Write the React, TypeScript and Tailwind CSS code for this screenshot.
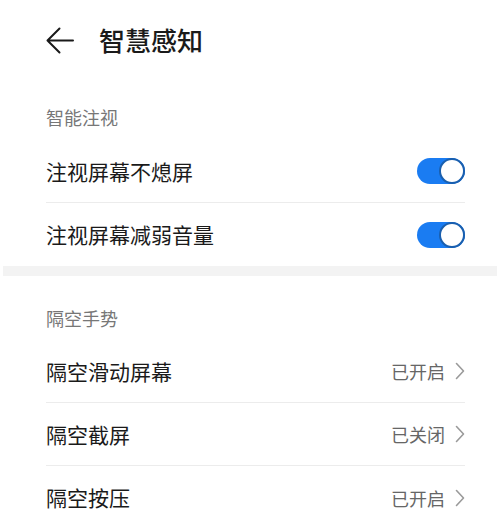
import React from "react";

const font = { fontFamily: '"Noto Sans CJK SC", "Noto Sans", sans-serif' };

const Toggle = () => (
  <div className="relative w-[48px] h-[26px] rounded-full bg-[#1a7cf2]">
    <div className="absolute right-0 top-0 w-[26px] h-[26px] rounded-full bg-white border-[2px] border-[#1a5fae]" />
  </div>
);

const Chevron = () => (
  <svg width="10" height="18" viewBox="0 0 10 18" fill="none">
    <path d="M1.5 1.5 L8.5 9 L1.5 16.5" stroke="#9a9a9a" strokeWidth="1.6" strokeLinecap="round" strokeLinejoin="round" />
  </svg>
);

const Row = ({ label, right, last }: { label: string; right: React.ReactNode; last?: boolean }) => (
  <div className={`flex items-center justify-between h-[63px] mr-[35px] ${last ? "" : "border-b border-[#ececec]"}`}>
    <span className="text-[21px] text-[#1a1a1a] leading-none">{label}</span>
    {right}
  </div>
);

const Value = ({ text }: { text: string }) => (
  <div className="flex items-center gap-[10px]">
    <span className="text-[18px] text-[#666666] leading-none">{text}</span>
    <Chevron />
  </div>
);

export default function App() {
  return (
    <div className="w-[500px] h-[510px] bg-white overflow-hidden" style={font}>
      {/* Header */}
      <div className="flex items-center h-[80px] pl-[46px]">
        <svg width="28" height="27" viewBox="0 0 28 27" fill="none">
          <path d="M13.5 1.5 L1.5 13.5 L13.5 25.5 M1.5 13.5 H27" stroke="#1a1a1a" strokeWidth="2" strokeLinecap="round" strokeLinejoin="round" />
        </svg>
        <span className="ml-[25px] text-[26px] font-medium text-[#1a1a1a] leading-none">智慧感知</span>
      </div>

      {/* 智能注视 */}
      <div className="pl-[46px]">
        <div className="pt-[26px] pb-[12px] text-[18px] text-[#777777] leading-[22px]">智能注视</div>
        <Row label="注视屏幕不熄屏" right={<Toggle />} />
        <Row label="注视屏幕减弱音量" right={<Toggle />} last />
      </div>

      <div className="h-[10px] bg-[#f3f3f3] mx-[3px]" />

      {/* 隔空手势 */}
      <div className="pl-[46px]">
        <div className="pt-[30px] pb-[10px] text-[18px] text-[#777777] leading-[24px]">隔空手势</div>
        <Row label="隔空滑动屏幕" right={<Value text="已开启" />} />
        <Row label="隔空截屏" right={<Value text="已关闭" />} />
        <Row label="隔空按压" right={<Value text="已开启" />} last />
      </div>
    </div>
  );
}
